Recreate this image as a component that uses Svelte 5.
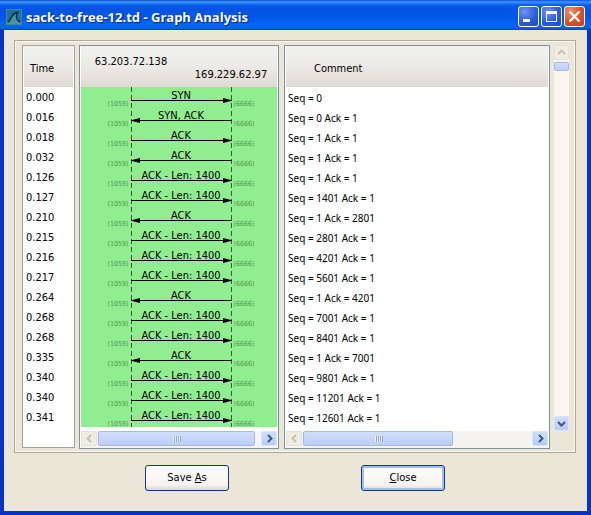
<script>
  const packets = [
    ['0.000', 'SYN', 'r', 'Seq = 0'],
    ['0.016', 'SYN, ACK', 'l', 'Seq = 0 Ack = 1'],
    ['0.018', 'ACK', 'r', 'Seq = 1 Ack = 1'],
    ['0.032', 'ACK', 'l', 'Seq = 1 Ack = 1'],
    ['0.126', 'ACK - Len: 1400', 'r', 'Seq = 1 Ack = 1'],
    ['0.127', 'ACK - Len: 1400', 'r', 'Seq = 1401 Ack = 1'],
    ['0.210', 'ACK', 'l', 'Seq = 1 Ack = 2801'],
    ['0.215', 'ACK - Len: 1400', 'r', 'Seq = 2801 Ack = 1'],
    ['0.216', 'ACK - Len: 1400', 'r', 'Seq = 4201 Ack = 1'],
    ['0.217', 'ACK - Len: 1400', 'r', 'Seq = 5601 Ack = 1'],
    ['0.264', 'ACK', 'l', 'Seq = 1 Ack = 4201'],
    ['0.268', 'ACK - Len: 1400', 'r', 'Seq = 7001 Ack = 1'],
    ['0.268', 'ACK - Len: 1400', 'r', 'Seq = 8401 Ack = 1'],
    ['0.335', 'ACK', 'l', 'Seq = 1 Ack = 7001'],
    ['0.340', 'ACK - Len: 1400', 'r', 'Seq = 9801 Ack = 1'],
    ['0.340', 'ACK - Len: 1400', 'r', 'Seq = 11201 Ack = 1'],
    ['0.341', 'ACK - Len: 1400', 'r', 'Seq = 12601 Ack = 1']
  ].map(([time, label, dir, comment]) => ({ time, label, dir, comment }));
  const rowHeight = 20;
</script>

{#snippet chevron(points)}
  <svg width="11" height="11" viewBox="0 0 11 11" aria-hidden="true">
    <polyline {points} fill="none" stroke="currentColor" stroke-width="2" />
  </svg>
{/snippet}

{#snippet hscroll(share)}
  <div class="hscroll">
    <button class="arrow off" aria-label="Scroll left" disabled>{@render chevron('7,2 3.5,5.5 7,9')}</button>
    <div class="track">
      <div class="thumb" style="width: {share}%"><i></i><i></i><i></i><i></i></div>
    </div>
    <button class="arrow" aria-label="Scroll right">{@render chevron('4,2 7.5,5.5 4,9')}</button>
  </div>
{/snippet}

<div class="window">
  <header class="titlebar">
    <svg class="logo" width="16" height="16" viewBox="0 0 16 16" aria-hidden="true">
      <rect x="0.5" y="0.5" width="15" height="15" fill="#1d6f9c" stroke="#4a8296" />
      <path d="M1 12 H3 C5 10 5.500 4 11 3.500 C9.500 7 10 10.500 13 12 H15 V15 H1 Z" fill="#4596a6" />
      <path d="M1.500 12.500 H3 C5 10.500 5.500 4 11.500 3.500 C9.500 7 10 11 13 12.500 H14.500" fill="none" stroke="#07293c" stroke-width="1.300" />
    </svg>
    <h1>sack-to-free-12.td - Graph Analysis</h1>
    <button class="cap" aria-label="Minimize">
      <svg width="19" height="19" viewBox="0 0 19 19"><path d="M4 13.500 H11" stroke="#fff" stroke-width="3" /></svg>
    </button>
    <button class="cap" aria-label="Maximize">
      <svg width="19" height="19" viewBox="0 0 19 19"><path d="M4.500 5 V14.500 H14.500 V5" fill="none" stroke="#fff" /><path d="M4 5.500 H15" stroke="#fff" stroke-width="3" /></svg>
    </button>
    <button class="cap close" aria-label="Close window">
      <svg width="19" height="19" viewBox="0 0 19 19"><path d="M4.500 4.500 L14.500 14.500 M14.500 4.500 L4.500 14.500" stroke="#fff" stroke-width="2.200" /></svg>
    </button>
  </header>

  <main>
    <section class="frame">
      <div class="pane time">
        <div class="head">Time</div>
        <ul>
          {#each packets as p}<li>{p.time}</li>{/each}
        </ul>
      </div>

      <div class="pane graph">
        <div class="head">
          <svg width="196" height="41">
            <text x="50" y="19">63.203.72.138</text>
            <text x="150" y="32">169.229.62.97</text>
          </svg>
        </div>
        <div class="canvas">
          <svg width="196" height={packets.length * rowHeight}>
            <line class="life" x1="50.5" x2="50.5" y1="0" y2="100%" />
            <line class="life" x1="150.5" x2="150.5" y1="0" y2="100%" />
            {#each packets as p, i}
              <g transform="translate(0 {i * rowHeight})">
                <line x1="50" x2="151" y1="13.5" y2="13.5" stroke="#000" />
                {#if p.dir === 'r'}
                  <path d="M142 11 L150 13 V14 L142 16 Z" />
                {:else}
                  <path d="M59 11 L51 13 V14 L59 16 Z" />
                {/if}
                <text x="100" y="12">{p.label}</text>
                <text class="port" x="37" y="19">(1059)</text>
                <text class="port" x="163" y="19">(6666)</text>
              </g>
            {/each}
          </svg>
        </div>
        {@render hscroll(97)}
      </div>

      <div class="pane comment">
        <div class="head">Comment</div>
        <ul>
          {#each packets as p}<li>{p.comment}</li>{/each}
        </ul>
        {@render hscroll(66)}
      </div>

      <div class="vscroll">
        <button class="arrow off" aria-label="Scroll up" disabled>{@render chevron('2,7 5.5,3.5 9,7')}</button>
        <div class="vthumb"></div>
        <button class="arrow down" aria-label="Scroll down">{@render chevron('2,4 5.5,7.5 9,4')}</button>
      </div>
    </section>

    <footer>
      <button class="push">Save <u>A</u>s</button>
      <button class="push default"><u>C</u>lose</button>
    </footer>
  </main>
</div>

<style>
  :global(body) { margin: 0; background: #0831c9; }
  .window {
    box-sizing: border-box;
    min-height: 100vh;
    display: flex;
    flex-direction: column;
    font: 11px/20px 'DejaVu Sans Condensed', 'DejaVu Sans', sans-serif;
    color: #000;
  }
  button { padding: 0; font: inherit; color: inherit; }
  svg { display: block; }
  .titlebar {
    display: flex;
    align-items: center;
    gap: 2px;
    height: 30px;
    box-sizing: border-box;
    padding: 3px 6px 0;
    background: linear-gradient(#0a4fd8 0, #3f94ff 2px, #0a5eea 5px, #0453e0 9px, #0358ea 18px, #0566fc 25px, #0460f4 28px, #0243c8 30px);
  }
  h1 {
    flex: 1;
    margin: 0 0 0 2px;
    font: bold 13px/20px 'Open Sans', 'Noto Sans', sans-serif;
    color: #fff;
    text-shadow: 1px 1px 1px #0a2a80;
    white-space: nowrap;
  }
  .cap {
    width: 21px;
    height: 21px;
    border: 1px solid #fff;
    border-radius: 3px;
    background: radial-gradient(circle at 30% 25%, #6d93f0, #2c5ddc 55%, #1c49c8);
  }
  .cap.close { background: radial-gradient(circle at 30% 25%, #f0906c, #dc5028 55%, #c83c14); }
  main {
    flex: 1;
    margin: 0 4px 4px;
    padding: 10px 11px 0 10px;
    background: #ece6d9;
  }
  .frame {
    display: flex;
    align-items: stretch;
    padding: 4px 6px 3px 7px;
    border: 1px solid #aca899;
    outline: 1px solid #fbf9f1;
    outline-offset: -2px;
  }
  .pane {
    box-sizing: border-box;
    flex: none;
    display: flex;
    flex-direction: column;
    background: #fff;
    border: 1px solid #7f919c;
    padding: 0 1px;
  }
  .time { width: 53px; margin: 0 4px 1px 0; border-color: #a5a195; }
  .graph { width: 200px; margin-right: 5px; }
  .comment { flex: 1; margin-right: 4px; }
  .head {
    height: 41px;
    line-height: 46px;
    background: linear-gradient(#f0f1ee, #eeecea 40%, #e9e1dd 75%, #dedad3);
  }
  .time .head { padding-left: 6px; }
  .comment .head { padding-left: 28px; }
  ul { list-style: none; margin: 0; padding: 1px 0 0 2px; }
  .comment ul { font-family: 'Noto Sans', 'Open Sans', sans-serif; font-size: 10px; padding-bottom: 3px; }
  li { height: 20px; white-space: nowrap; }
  .canvas { background: #90ee90; margin-bottom: 4px; overflow: hidden; }
  text { text-anchor: middle; }
  .port { font-size: 7px; fill: #4f964f; }
  .life { stroke: #2f5f2f; stroke-dasharray: 5 3; }
  .hscroll { display: flex; gap: 1px; padding-bottom: 2px; background: #f6f4ee; }
  .track { flex: 1; display: flex; }
  .arrow {
    display: grid;
    place-items: center;
    flex: none;
    box-sizing: border-box;
    width: 16px;
    height: 15px;
    border: 1px solid #d9e4fc;
    border-radius: 2px;
    background: linear-gradient(#d0defd, #b6cbf8);
    color: #40587f;
  }
  .arrow.off { background: #efede4; border-color: #e4e2d8; color: #c4c2b6; }
  .thumb, .vthumb {
    box-sizing: border-box;
    border: 1px solid #a5baea;
    border-radius: 2px;
    background: linear-gradient(#d0defd, #bccffa);
  }
  .thumb { display: flex; justify-content: center; align-items: center; gap: 1px; }
  .thumb i { width: 1px; height: 6px; background: #eef4fe; box-shadow: 1px 0 #8ca9e6; }
  .vscroll {
    display: flex;
    flex-direction: column;
    width: 15px;
    margin-bottom: 18px;
    background: #f8f6ef;
  }
  .vscroll .arrow { width: 15px; }
  .vthumb { height: 9px; margin-top: 2px; }
  .down { margin-top: auto; }
  footer { display: flex; justify-content: center; gap: 132px; padding: 12px 0 20px; }
  .push {
    width: 84px;
    height: 26px;
    border: 1px solid #123c74;
    border-radius: 3px;
    background: linear-gradient(#fff, #f4f3ee 80%, #dcd8cd);
  }
  .default { box-shadow: inset 0 0 0 2px #a3bff0; }
</style>
